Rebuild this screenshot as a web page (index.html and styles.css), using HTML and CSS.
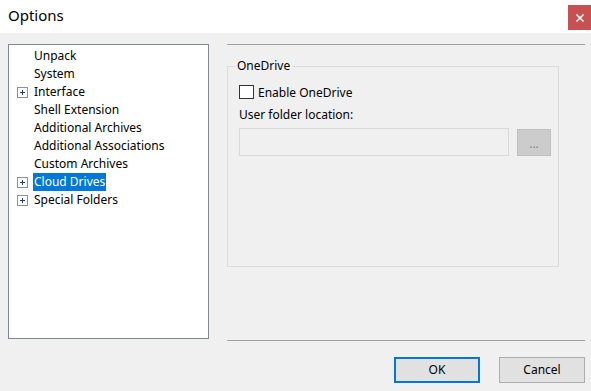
FILE: index.html
```html
<!DOCTYPE html>
<html>
<head>
<meta charset="utf-8">
<link rel="stylesheet" href="styles.css">
</head>
<body>
<div class="window">
  <div class="titlebar">
    <span class="title">Options</span>
    <div class="close"><svg width="10" height="10" viewBox="0 0 10 10"><path d="M1.5 1.5 L8.5 8.5 M8.5 1.5 L1.5 8.5" stroke="#fff" stroke-width="1.6"/></svg></div>
  </div>
  <div class="main">
    <div class="tree">
      <div class="item"><span class="exp"></span><span class="lbl">Unpack</span></div>
      <div class="item"><span class="exp"></span><span class="lbl">System</span></div>
      <div class="item"><span class="exp plus"></span><span class="lbl">Interface</span></div>
      <div class="item"><span class="exp"></span><span class="lbl">Shell Extension</span></div>
      <div class="item"><span class="exp"></span><span class="lbl">Additional Archives</span></div>
      <div class="item"><span class="exp"></span><span class="lbl">Additional Associations</span></div>
      <div class="item"><span class="exp"></span><span class="lbl">Custom Archives</span></div>
      <div class="item"><span class="exp plus"></span><span class="lbl sel">Cloud Drives</span></div>
      <div class="item"><span class="exp plus"></span><span class="lbl">Special Folders</span></div>
    </div>
    <div class="panel">
      <fieldset class="group">
        <legend>OneDrive</legend>
        <div class="check"><span class="box"></span><span>Enable OneDrive</span></div>
        <div class="label">User folder location:</div>
        <div class="pathrow">
          <div class="input"></div>
          <div class="browse">...</div>
        </div>
      </fieldset>
    </div>
  </div>
  <div class="footer">
    <div class="btn ok">OK</div>
    <div class="btn">Cancel</div>
  </div>
</div>
</body>
</html>
```
FILE: styles.css
```css
* { box-sizing: border-box; }
html, body { margin: 0; padding: 0; }
body {
  width: 591px;
  height: 391px;
  background: #f0f0f0;
  font-family: "Noto Sans", "Open Sans", sans-serif;
  font-size: 12px;
  color: #000;
  overflow: hidden;
}
.window { width: 591px; height: 391px; display: flex; flex-direction: column; }
.titlebar {
  height: 33px;
  background: #fff;
  display: flex;
  align-items: flex-start;
  justify-content: space-between;
  padding-left: 8px;
}
.title { font-size: 15px; line-height: 31px; }
.close {
  width: 23px;
  height: 25px;
  margin-top: 5px;
  background: #c75050;
  display: flex;
  align-items: center;
  justify-content: center;
}
.close svg { display: block; }
.main {
  display: flex;
  padding: 11px 6px 0 8px;
  gap: 18px;
}
.tree {
  width: 201px;
  height: 295px;
  background: #fff;
  border: 1px solid #828790;
  padding-top: 2px;
}
.item {
  height: 18px;
  display: flex;
  align-items: center;
}
.exp {
  width: 11px;
  height: 11px;
  margin-left: 8px;
  margin-right: 5px;
  flex: none;
  position: relative;
}
.exp.plus { border: 1px solid #919191; background: #fff; }
.exp.plus::before {
  content: "";
  position: absolute;
  left: 2px; top: 4px;
  width: 5px; height: 1px;
  background: #1f3b73;
}
.exp.plus::after {
  content: "";
  position: absolute;
  left: 4px; top: 2px;
  width: 1px; height: 5px;
  background: #1f3b73;
}
.lbl { padding: 0 1px; line-height: 18px; }
.lbl.sel { background: #0078d7; color: #fff; }
.panel {
  width: 358px;
  height: 297px;
  border-top: 1px solid #a0a0a0;
  border-bottom: 1px solid #a0a0a0;
}
.group {
  margin: 14px 0 0 0;
  width: 332px;
  height: 208px;
  border: 1px solid #dcdcdc;
  padding: 10px 0 0 11px;
  min-width: 0;
}
.group legend {
  padding: 0 2px;
  margin-left: -4px;
  line-height: 14px;
}
.check { display: flex; align-items: center; height: 18px; }
.box {
  width: 15px;
  height: 14px;
  border: 1px solid #333;
  background: #fff;
  margin-right: 4px;
}
.label { margin-top: 5px; height: 18px; line-height: 18px; }
.pathrow { display: flex; gap: 8px; margin-top: 4px; }
.input {
  width: 270px;
  height: 28px;
  border: 1px solid #d9d9d9;
  background: #f0f0f0;
}
.browse {
  width: 34px;
  height: 27px;
  margin-top: 1px;
  background: #cccccc;
  border: 1px solid #bfbfbf;
  color: #8a8a8a;
  text-align: center;
  line-height: 28px;
}
.footer {
  display: flex;
  justify-content: flex-end;
  gap: 19px;
  padding: 16px 6px 0 0;
}
.btn {
  width: 86px;
  height: 26px;
  border: 1px solid #adadad;
  background: #e1e1e1;
  text-align: center;
  line-height: 24px;
}
.btn.ok { border: 2px solid #0078d7; line-height: 22px; }
```
